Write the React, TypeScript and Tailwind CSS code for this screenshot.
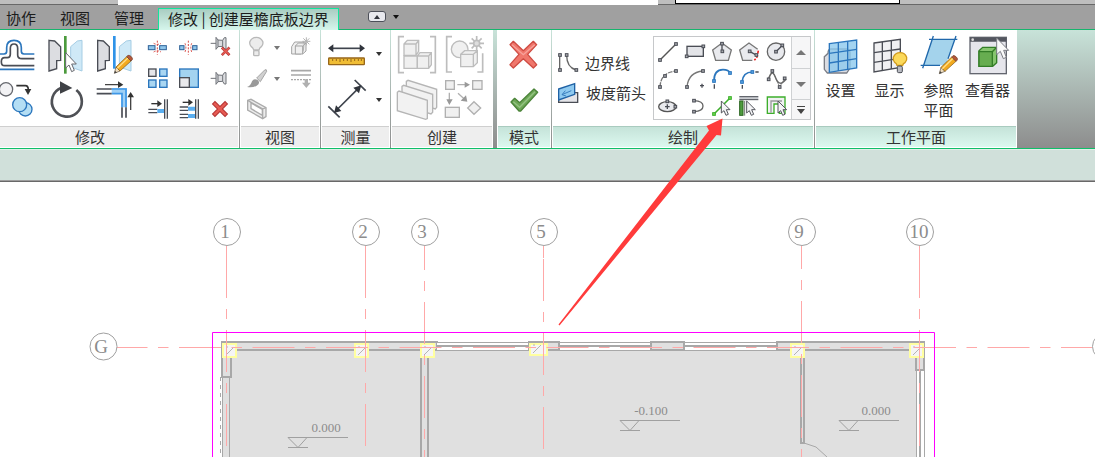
import React from "react";
import clsx from "clsx";

const DARK = "#4a4d55";
const BLUE = "#2b76bd";
const GREEN = "#3dae2b";

interface IconProps {
  box: string;
  className?: string;
  children: React.ReactNode;
}

const Icon: React.FC<IconProps> = ({ box, className = "size-9", children }) => {
  return (
    <svg
      viewBox={box}
      fill="none"
      aria-hidden="true"
      className={clsx("block shrink-0 overflow-visible", className)}
    >
      {children}
    </svg>
  );
};

const SmallIcon: React.FC<IconProps> = ({ box, children }) => {
  return (
    <Icon box={box} className="size-5">
      {children}
    </Icon>
  );
};

const Tool = ({
  label,
  children,
}: {
  label: string;
  children: React.ReactNode;
}) => {
  return (
    <button type="button" aria-label={label} className="block">
      {children}
    </button>
  );
};

const Caret = ({ label, dim = false }: { label: string; dim?: boolean }) => {
  return (
    <button
      type="button"
      aria-label={label}
      className="flex w-3 items-center justify-center"
    >
      <svg viewBox="0 0 6 4" className="h-1 w-1.5" aria-hidden="true">
        <path d="M0 0h6L3 4z" fill={dim ? "#777" : "#333"} />
      </svg>
    </button>
  );
};

// drawing helpers, all in the coordinates of the surrounding icon

const Cursor = ({ x, y }: { x: number; y: number }) => (
  <path
    transform={`translate(${x} ${y})`}
    d="M0 0V36L8 29L14 43L21 40L15 26H26Z"
    fill="#f4f4f6"
    stroke="#55575e"
    strokeWidth="3"
  />
);

const Node = ({
  x,
  y,
  color = DARK,
  fill = "#a9abb0",
}: {
  x: number;
  y: number;
  color?: string;
  fill?: string;
}) => (
  <rect
    x={x - 4}
    y={y - 4}
    width="8"
    height="8"
    fill={fill}
    stroke={color}
    strokeWidth="3"
  />
);

const Pencil = ({ x, y }: { x: number; y: number }) => (
  <g transform={`translate(${x} ${y})`} strokeWidth="2">
    <path d="M0 0L5 -19L17 -7Z" fill="#eeddc0" stroke="#5b4a33" />
    <path d="M0 0L2 -8L8 -2Z" fill="#444" />
    <path d="M5 -19L37 -50L50 -37L17 -7Z" fill="#f2a91f" stroke="#7a5312" />
    <path d="M9 -15L41 -46" stroke="#ffdf8a" strokeWidth="4" />
    <path
      d="M37 -50L41 -54Q46 -55 51 -50Q56 -45 54 -41L50 -37Z"
      fill="#b5573a"
      stroke="#6b3a24"
    />
  </g>
);

const Pin = ({ y }: { y: number }) => (
  <g
    transform={`translate(632 ${y})`}
    stroke="#6f7278"
    strokeWidth="3"
    fill="#dcdde0"
  >
    <path d="M0 0H16" />
    <path d="M16 -18L22 -10L36 -9L41 -17H46V17H41L36 9L22 10L16 18Z" />
    <path d="M22 -10V10M36 -9V9" />
  </g>
);

const Cross = ({ x, y, r }: { x: number; y: number; r: number }) => (
  <g transform={`translate(${x} ${y}) scale(${r / 20})`}>
    <path
      d="M-16 -16L16 16M16 -16L-16 16"
      stroke="#b33434"
      strokeWidth="14"
      strokeLinecap="square"
    />
    <path
      d="M-16 -16L16 16M16 -16L-16 16"
      stroke="#e65a52"
      strokeWidth="8"
      strokeLinecap="square"
    />
  </g>
);

interface PanelProps {
  title: string;
  active?: boolean;
  className?: string;
  bodyClassName?: string;
  children: React.ReactNode;
}

const Panel: React.FC<PanelProps> = ({
  title,
  active,
  className,
  bodyClassName,
  children,
}) => {
  return (
    <section
      className={clsx("flex shrink-0 flex-col bg-white", className)}
      aria-label={title}
    >
      <div className={clsx("flex h-24 items-start pt-1.5", bodyClassName)}>
        {children}
      </div>
      <h2
        className={clsx(
          "mx-px mb-px h-[21px] border-t text-center text-[15px] leading-5",
          active
            ? "border-[#a9cbbf] bg-linear-to-b from-[#c5e3d9] to-[#dcf8ef]"
            : "border-[#cfcfcf] bg-[#eeeeee]"
        )}
      >
        {title}
      </h2>
    </section>
  );
};

const ModifyPanel = () => {
  return (
    <Panel
      title="修改"
      className="-ml-[59px] w-[298px]"
      bodyClassName="justify-end gap-[15px] pr-2.5"
    >
      <div className="grid grid-cols-[36px_36px_36px] gap-x-[13px] gap-y-2.5">
        <Tool label="偏移">
          <Icon box="-6 108 108 108">
            <g strokeWidth="5">
              <path
                d="M-30 162H12Q20 162 20 154V143Q20 121 42 121Q64 121 64 143V154Q64 162 72 162H103"
                stroke={BLUE}
              />
              <path
                d="M103 176H66Q53 176 53 165V145Q53 132 42 132Q31 132 31 145V163Q31 173 22 173H14Q4 173 4 185Q4 197 14 197H103"
                stroke={DARK}
              />
              <path d="M-30 208H103" stroke={BLUE} />
            </g>
          </Icon>
        </Tool>
        <Tool label="镜像 - 拾取轴">
          <Icon box="141 108 108 108">
            <path
              d="M147 121L164 123L182 140V181L170 182V206L147 213Z"
              fill="#dcdde1"
              stroke={DARK}
              strokeWidth="4"
            />
            <path
              d="M246 121L232 123L212 140V201L246 213Z"
              fill="#cfe9f7"
              stroke="#a5cde4"
              strokeWidth="3"
            />
            <path d="M196 108V221" stroke="#4b9a3c" strokeWidth="8" />
            <path
              d="M197 158V204L207 195L215 215L223 211L215 192H229Z"
              fill="#fff"
              stroke="#66686e"
              strokeWidth="3"
            />
          </Icon>
        </Tool>
        <Tool label="镜像 - 绘制轴">
          <Icon box="288 108 108 108">
            <path
              d="M293 121L310 123L328 140V181L316 182V206L293 213Z"
              fill="#dcdde1"
              stroke={DARK}
              strokeWidth="4"
            />
            <path
              d="M393 121L379 123L358 140V201L393 213Z"
              fill="#cfe9f7"
              stroke="#a5cde4"
              strokeWidth="3"
            />
            <path d="M343 108V206" stroke="#2f93e8" strokeWidth="8" />
            <Pencil x={343} y={220} />
          </Icon>
        </Tool>
        <Tool label="复制">
          <Icon box="-6 246 108 108">
            <circle
              cx="18"
              cy="268"
              r="20"
              fill="#f2f2f4"
              stroke="#66686e"
              strokeWidth="4"
            />
            <path d="M49 257H76Q85 257 85 270" stroke="#333" strokeWidth="5" />
            <path d="M74 267H94L84 285Z" fill="#333" />
            <g fill="#b4def4" stroke={BLUE} strokeWidth="4">
              <circle cx="76" cy="328" r="20" />
              <circle cx="59" cy="314" r="21" />
            </g>
          </Icon>
        </Tool>
        <Tool label="旋转">
          <Icon box="141 246 108 108">
            <path
              d="M229 270A45 45 0 1 1 184 263"
              stroke="#4f5156"
              strokeWidth="8"
            />
            <path d="M180 244L217 264L180 281Z" fill="#3f4146" />
          </Icon>
        </Tool>
        <Tool label="修剪/延伸为角">
          <Icon box="288 246 108 108">
            <path d="M335 264H381V322H364V282H335Z" fill="#9fd0f5" />
            <path
              d="M335 267H378V322M335 281H366V322"
              stroke="#3f97e6"
              strokeWidth="5"
            />
            <path
              d="M290 267H335M290 281H335M366 322V353M378 322V353"
              stroke={DARK}
              strokeWidth="5"
            />
            <path d="M315 254H360M392 330V290" stroke="#444" strokeWidth="4" />
            <path
              d="M354 244L370 254L354 264ZM382 292L392 276L402 292Z"
              fill="#333"
            />
          </Icon>
        </Tool>
      </div>
      <div className="mt-0.5 grid grid-cols-[20px_20px_20px] gap-[11px]">
        <Tool label="拆分图元">
          <SmallIcon box="441 114 60 60">
            <g fill="#8fc5ea" stroke="#2f6298" strokeWidth="3">
              <rect x="445" y="137" width="20" height="12" />
              <rect x="479" y="137" width="20" height="12" />
            </g>
            <path
              d="M472 122V164M461 130Q472 136 483 130M461 156Q472 149 483 156"
              stroke="#d84b45"
              strokeWidth="3"
              strokeDasharray="6 4"
            />
          </SmallIcon>
        </Tool>
        <Tool label="用间隙拆分">
          <SmallIcon box="534 114 60 60">
            <g fill="#8fc5ea" stroke="#2f6298" strokeWidth="3">
              <rect x="539" y="137" width="13" height="12" />
              <rect x="578" y="137" width="13" height="12" />
            </g>
            <path
              d="M565 122V164M555 130Q560 143 555 156M575 130Q570 143 575 156"
              stroke="#d84b45"
              strokeWidth="3"
              strokeDasharray="6 4"
            />
          </SmallIcon>
        </Tool>
        <Tool label="解锁">
          <SmallIcon box="627 114 60 60">
            <Pin y={130} />
            <Cross x={677} y={154} r={11} />
          </SmallIcon>
        </Tool>
        <Tool label="阵列">
          <SmallIcon box="441 207 60 60">
            <rect
              x="446"
              y="207"
              width="22"
              height="22"
              fill="#e6e6ea"
              stroke={DARK}
              strokeWidth="4"
            />
            <g fill="#a9d6f2" stroke={BLUE} strokeWidth="4">
              <rect x="479" y="207" width="22" height="22" />
              <rect x="446" y="240" width="22" height="22" />
              <rect x="479" y="240" width="22" height="22" />
            </g>
          </SmallIcon>
        </Tool>
        <Tool label="缩放">
          <SmallIcon box="534 207 60 60">
            <rect
              x="539"
              y="207"
              width="56"
              height="55"
              fill="#a3d3f0"
              stroke={BLUE}
              strokeWidth="4"
            />
            <rect
              x="539"
              y="233"
              width="29"
              height="29"
              fill="#e9e9ec"
              stroke={DARK}
              strokeWidth="4"
            />
          </SmallIcon>
        </Tool>
        <Tool label="锁定">
          <SmallIcon box="627 207 60 60">
            <Pin y={235} />
          </SmallIcon>
        </Tool>
        <Tool label="修剪/延伸单个图元">
          <SmallIcon box="441 300 60 60">
            <path d="M445 328H472M445 338H472" stroke={DARK} strokeWidth="4" />
            <path d="M472 333H494" stroke="#5aaef0" strokeWidth="12" />
            <path d="M494 298V356M502 298V356" stroke={DARK} strokeWidth="4" />
            <path d="M454 311H476" stroke="#333" strokeWidth="4" />
            <path d="M472 301L486 311L472 321Z" fill="#333" />
          </SmallIcon>
        </Tool>
        <Tool label="修剪/延伸多个图元">
          <SmallIcon box="534 300 60 60">
            <path
              d="M539 321H564M539 331H564M539 343H564M539 353H564"
              stroke={DARK}
              strokeWidth="4"
            />
            <path
              d="M564 326H587M564 348H587"
              stroke="#5aaef0"
              strokeWidth="12"
            />
            <path d="M587 298V356M595 298V356" stroke={DARK} strokeWidth="4" />
            <path d="M548 307H570" stroke="#333" strokeWidth="4" />
            <path d="M565 297L579 307L565 317Z" fill="#333" />
          </SmallIcon>
        </Tool>
        <Tool label="删除">
          <SmallIcon box="627 300 60 60">
            <Cross x={660} y={327} r={19} />
          </SmallIcon>
        </Tool>
      </div>
    </Panel>
  );
};

const ViewPanel = () => {
  return (
    <Panel title="视图" className="w-20" bodyClassName="pl-[7px]">
      <div className="mt-0.5 grid grid-cols-[20px_12px_20px] gap-x-1 gap-y-[11px]">
        <Tool label="隐藏">
          <SmallIcon box="33 114 60 60">
            <g fill="#ececec" stroke="#b9b9b9" strokeWidth="4">
              <path d="M53 150Q52 144 46 140Q39 133 42 124Q48 112 61 112Q74 112 80 124Q83 133 76 140Q70 144 69 150Z" />
              <rect x="53" y="152" width="16" height="15" rx="3" />
            </g>
          </SmallIcon>
        </Tool>
        <Caret label="隐藏选项" dim />
        <div className="pl-1">
          <Tool label="替换图元">
            <SmallIcon box="165 114 60 60">
              <g fill="#f0f0f0" stroke="#a3a3a3" strokeWidth="3">
                <path d="M167 140L176 126L204 126L203 154L194 162H167Z" />
                <path d="M178 138H200V162H178ZM178 138L187 129H210L200 138M210 129V153L200 162" />
              </g>
              <path
                d="M211 112V136M199 124H223M202 115L220 133M220 115L202 133"
                stroke="#b3b3b3"
                strokeWidth="3"
              />
            </SmallIcon>
          </Tool>
        </div>
        <Tool label="线处理">
          <SmallIcon box="33 207 60 60">
            <path
              d="M62 234L86 210Q92 206 92 214L73 245Z"
              fill="#d0d0d0"
              stroke="#a5a5a5"
              strokeWidth="3"
            />
            <path
              d="M33 261Q44 258 48 244Q54 233 66 241Q74 250 62 257Q50 264 33 261Z"
              fill="#999"
            />
          </SmallIcon>
        </Tool>
        <Caret label="线处理选项" dim />
        <div className="pl-1">
          <Tool label="线样式">
            <SmallIcon box="165 207 60 60">
              <path
                d="M165 212H225M165 225H225"
                stroke="#a8a8a8"
                strokeWidth="5"
              />
              <path
                d="M165 239H225"
                stroke="#a8a8a8"
                strokeWidth="4"
                strokeDasharray="6 3"
              />
              <path
                d="M206 238H216V248H224L211 264L198 248H206Z"
                fill="#b0b0b0"
              />
            </SmallIcon>
          </Tool>
        </div>
        <Tool label="选择框">
          <SmallIcon box="33 300 60 60">
            <g stroke="#ababab" strokeWidth="4" fill="#ececec">
              <path d="M35 301L45 298L90 323V350L80 356L35 330Z" />
              <path d="M45 309L79 328V346L45 326Z" fill="#fff" />
              <path d="M35 301L80 327V356M80 327L90 323" fill="none" />
            </g>
          </SmallIcon>
        </Tool>
      </div>
    </Panel>
  );
};

const MeasurePanel = () => {
  return (
    <Panel title="测量" className="w-[69px]" bodyClassName="pl-[7px]">
      <div className="grid grid-cols-[36px_12px] gap-x-[9px] gap-y-2.5">
        <Tool label="测量">
          <Icon box="276 108 108 108">
            <path d="M290 145H374" stroke="#3f444d" strokeWidth="5" />
            <path
              d="M276 145L292 133V157ZM387 145L371 133V157Z"
              fill="#30343c"
            />
            <rect
              x="278"
              y="174"
              width="107"
              height="20"
              rx="2"
              fill="#f0bd35"
              stroke="#97661a"
              strokeWidth="4"
            />
            <path
              d="M290 177V183M301 177V183M312 177V186M323 177V183M334 177V183M345 177V186M356 177V183M367 177V183M376 177V183"
              stroke="#97661a"
              strokeWidth="3"
            />
          </Icon>
        </Tool>
        <Caret label="测量选项" />
        <Tool label="对齐尺寸标注">
          <Icon box="276 246 108 108">
            <path
              d="M302 330L364 268M356 240L389 272M277 319L311 352"
              stroke="#3f444d"
              strokeWidth="5"
            />
            <path
              d="M376 256L352 263L369 280ZM294 339L300 316L316 333Z"
              fill="#30343c"
            />
          </Icon>
        </Tool>
        <Caret label="尺寸标注选项" />
      </div>
    </Panel>
  );
};

const CreatePanel = () => {
  return (
    <Panel title="创建" className="w-[102px]" bodyClassName="pl-[7px]">
      <div className="grid grid-cols-[36px_36px] gap-x-3 gap-y-2.5">
        <Tool label="创建部件">
          <Icon box="486 108 108 108">
            <g stroke="#bdbdbd" strokeWidth="5">
              <path d="M504 110H488V218H504M582 110H598V218H582" />
              <g fill="#f0f0f0" strokeWidth="4">
                <path d="M504 132L514 121H548V154L540 166H504ZM504 132H540V166M540 132L548 121" />
                <path d="M504 168H544V205H504Z" />
                <path d="M544 168L552 158H586V194L578 205H544ZM544 168H578V205M578 168L586 158" />
              </g>
            </g>
          </Icon>
        </Tool>
        <Tool label="创建组">
          <Icon box="630 108 108 108">
            <g stroke="#bdbdbd" strokeWidth="5">
              <path d="M648 110H632V216H648M724 216H740V160" />
              <g fill="#f0f0f0" strokeWidth="4">
                <circle cx="671" cy="148" r="25" />
                <path d="M674 163L686 152H724V188L712 200H674ZM674 163H712V200M712 163L724 152" />
              </g>
              <circle cx="722" cy="130" r="9" fill="#ddd" />
              <path d="M722 108V120M722 140V152M700 130H712M732 130H744M707 115L715 123M729 137L737 145M737 115L729 123M715 137L707 145" />
            </g>
          </Icon>
        </Tool>
        <Tool label="创建零件">
          <Icon box="486 246 108 108">
            <g fill="#f2f2f2" stroke="#b5b5b5" strokeWidth="4">
              <path d="M511 244L516 241L602 268V322L598 327L511 300Z" />
              <path d="M498 259L503 256L590 283V337L585 342L498 314Z" />
              <path d="M484 277L489 273L574 301V356L569 358L484 332Z" />
            </g>
          </Icon>
        </Tool>
        <Tool label="创建类似实例">
          <Icon box="630 246 108 108">
            <g stroke="#b0b0b0" strokeWidth="4">
              <g fill="#f0f0f0">
                <rect x="629" y="242" width="26" height="26" />
                <rect x="710" y="242" width="28" height="26" />
                <rect x="628" y="322" width="42" height="30" />
                <path d="M714 305L734 324L714 343L695 324Z" />
              </g>
              <path d="M664 254H692M640 278V302M666 280L684 296" />
            </g>
            <path
              d="M686 245L702 254L686 263ZM631 298H650L640 315ZM694 305L674 302L690 286Z"
              fill="#999"
            />
          </Icon>
        </Tool>
      </div>
    </Panel>
  );
};

const ModePanel = () => {
  return (
    <Panel
      title="模式"
      active
      className="ml-[3px] w-[54px]"
      bodyClassName="justify-center"
    >
      <div className="grid gap-2.5">
        <Tool label="取消编辑模式">
          <Icon box="48 108 108 108">
            <path
              d="M60 134L70 124L100 152L130 124L140 134L113 163L140 194L130 204L100 176L70 204L60 194L87 163Z"
              fill="#f0776c"
              stroke="#cf4c43"
              strokeWidth="4"
              strokeLinejoin="round"
            />
            <path d="M66 134L100 164L134 134" stroke="#f7a39b" strokeWidth="4" />
          </Icon>
        </Tool>
        <Tool label="完成编辑模式">
          <Icon box="48 246 108 108">
            <path
              d="M63 306L74 295L89 308L132 267L143 277L92 333H87Z"
              fill="#6da656"
              stroke="#4b8439"
              strokeWidth="4"
              strokeLinejoin="round"
            />
            <path d="M70 305L89 322L135 275" stroke="#94c383" strokeWidth="4" />
          </Icon>
        </Tool>
      </div>
    </Panel>
  );
};

const drawTools: { label: string; box: string; art: React.ReactNode }[] = [
  {
    label: "线",
    box: "504 123 60 60",
    art: (
      <>
        <path d="M510 177L558 129" stroke="#555" strokeWidth="4" />
        <Node x={510} y={177} />
        <Node x={558} y={129} />
      </>
    ),
  },
  {
    label: "矩形",
    box: "588 123 60 60",
    art: (
      <>
        <rect
          x="594"
          y="136"
          width="49"
          height="30"
          fill="#e3e4e8"
          stroke={DARK}
          strokeWidth="4"
        />
        <Node x={593} y={166} />
        <Node x={643} y={136} />
      </>
    ),
  },
  {
    label: "内接多边形",
    box: "669 123 60 60",
    art: (
      <>
        <path
          d="M699 126L727 147L718 178H680L671 147Z"
          fill="#e9eaee"
          stroke="#777"
          strokeWidth="4"
        />
        <path d="M699 127V151" stroke={DARK} strokeWidth="4" />
        <Node x={699} y={128} />
        <Node x={700} y={151} />
      </>
    ),
  },
  {
    label: "外接多边形",
    box: "750 123 60 60",
    art: (
      <>
        <path
          d="M790 178H761L752 147L780 126L806 145"
          fill="#e9eaee"
          stroke="#777"
          strokeWidth="4"
        />
        <path d="M782 151L801 162" stroke={DARK} strokeWidth="4" />
        <path
          d="M808 149L804 168L796 178"
          stroke="#e22"
          strokeWidth="5"
          strokeDasharray="9 4"
        />
        <Node x={782} y={151} />
        <Node x={802} y={162} />
      </>
    ),
  },
  {
    label: "圆形",
    box: "832 123 60 60",
    art: (
      <>
        <circle
          cx="862"
          cy="152"
          r="26"
          fill="#e9eaee"
          stroke="#666"
          strokeWidth="4"
        />
        <path d="M862 152L882 132" stroke={DARK} strokeWidth="4" />
        <Node x={862} y={152} />
        <Node x={881} y={133} />
      </>
    ),
  },
  {
    label: "起点-终点-半径弧",
    box: "504 204 60 60",
    art: (
      <>
        <path
          d="M510 258Q512 214 558 210"
          stroke="#777"
          strokeWidth="4"
          strokeDasharray="14 3"
        />
        <Node x={510} y={258} />
        <Node x={525} y={225} />
        <Node x={558} y={210} />
      </>
    ),
  },
  {
    label: "圆心-端点弧",
    box: "588 204 60 60",
    art: (
      <>
        <path d="M594 258Q598 214 642 210" stroke="#777" strokeWidth="4" />
        <path d="M639 248V260M633 254H645" stroke={DARK} strokeWidth="4" />
        <Node x={594} y={258} />
        <Node x={642} y={210} />
      </>
    ),
  },
  {
    label: "相切-端点弧",
    box: "669 204 60 60",
    art: (
      <>
        <path
          d="M675 240Q675 206 702 206Q719 206 723 216"
          stroke={BLUE}
          strokeWidth="5"
        />
        <path d="M676 250V263" stroke={DARK} strokeWidth="4" />
        <Node x={675} y={240} color={BLUE} fill="#5aa5e4" />
        <Node x={723} y={216} color={BLUE} fill="#5aa5e4" />
      </>
    ),
  },
  {
    label: "圆角弧",
    box: "750 204 60 60",
    art: (
      <>
        <path d="M759 243Q762 213 790 213" stroke={BLUE} strokeWidth="5" />
        <path d="M760 252V263M799 213H809" stroke={DARK} strokeWidth="4" />
        <Node x={759} y={243} color={BLUE} fill="#5aa5e4" />
        <Node x={790} y={213} color={BLUE} fill="#5aa5e4" />
      </>
    ),
  },
  {
    label: "样条曲线",
    box: "832 204 60 60",
    art: (
      <>
        <path
          d="M840 235L851 210L873 258L888 232"
          stroke="#999"
          strokeWidth="3"
        />
        <path
          d="M838 238Q850 200 860 228Q872 262 892 234"
          stroke="#666"
          strokeWidth="4"
        />
        <Node x={840} y={235} />
        <Node x={851} y={210} />
        <Node x={873} y={258} />
        <Node x={888} y={232} />
      </>
    ),
  },
  {
    label: "椭圆",
    box: "504 288 60 60",
    art: (
      <>
        <ellipse
          cx="532"
          cy="320"
          rx="26"
          ry="15"
          fill="#e9eaee"
          stroke="#555"
          strokeWidth="4"
        />
        <path d="M532 313V327M525 320H539" stroke={DARK} strokeWidth="4" />
        <Node x={532} y={304} />
        <Node x={556} y={320} />
      </>
    ),
  },
  {
    label: "半椭圆",
    box: "588 288 60 60",
    art: (
      <>
        <path
          d="M615 302Q642 303 642 318Q642 334 615 335"
          stroke="#666"
          strokeWidth="4"
        />
        <Node x={615} y={302} />
        <Node x={615} y={335} />
      </>
    ),
  },
  {
    label: "拾取线",
    box: "669 288 60 60",
    art: (
      <>
        <path d="M675 342L723 294" stroke={GREEN} strokeWidth="5" />
        <Node x={675} y={342} color={GREEN} fill="#6fdc52" />
        <Node x={723} y={294} color={GREEN} fill="#6fdc52" />
        <Cursor x={697} y={303} />
      </>
    ),
  },
  {
    label: "拾取墙",
    box: "750 288 60 60",
    art: (
      <>
        <path d="M751 294H808" stroke="#c9cbd0" strokeWidth="8" />
        <path d="M751 290H808M751 299H808" stroke={DARK} strokeWidth="3" />
        <rect
          x="752"
          y="303"
          width="10"
          height="43"
          fill="#4f9c3f"
          stroke="#28641e"
          strokeWidth="3"
        />
        <path d="M767 303V347" stroke="#777" strokeWidth="3" />
        <Cursor x={773} y={303} />
      </>
    ),
  },
  {
    label: "拾取边界",
    box: "832 288 60 60",
    art: (
      <>
        <path
          d="M836 291H889V340H872V312H856V340H836Z"
          fill="#f1f1f3"
          stroke={GREEN}
          strokeWidth="4"
        />
        <path d="M847 338V303H880" stroke="#9a9a9e" strokeWidth="4" />
        <Cursor x={868} y={303} />
      </>
    ),
  },
];

const DrawPanel = () => {
  return (
    <Panel
      title="绘制"
      active
      className="w-[262px]"
      bodyClassName="justify-between pl-1.5 pr-[3px]"
    >
      <div className="pt-3 text-[15px]">
        <button type="button" className="flex h-[30px] items-center gap-[7px]">
          <SmallIcon box="206 159 60 60">
            <path
              d="M211 166V210M232 166Q232 202 260 210"
              stroke="#666"
              strokeWidth="4"
            />
            <Node x={212} y={165} />
            <Node x={212} y={210} />
            <Node x={232} y={165} />
            <Node x={261} y={210} />
          </SmallIcon>
          边界线
        </button>
        <button type="button" className="flex h-[30px] items-center gap-2">
          <SmallIcon box="206 249 60 60">
            <path
              d="M220 278H265V307H208V290"
              fill="#e4e4e8"
              stroke={DARK}
              strokeWidth="4"
            />
            <path
              d="M208 267L256 251V283L208 300Z"
              fill="#8fcaf0"
              stroke="#1f62a5"
              strokeWidth="4"
            />
            <path
              d="M218 284L246 272M218 284L228 272M218 284L230 288"
              stroke="#3b80c0"
              strokeWidth="3"
            />
          </SmallIcon>
          坡度箭头
        </button>
      </div>
      <div className="flex h-[84px] w-[158px] border border-[#c6c8ca]">
        <div className="grid grow grid-cols-[repeat(5,27px)] grid-rows-[repeat(3,27px)] place-items-center content-start pt-px">
          {drawTools.map((tool) => (
            <Tool key={tool.label} label={tool.label}>
              <SmallIcon box={tool.box}>{tool.art}</SmallIcon>
            </Tool>
          ))}
        </div>
        <div className="flex w-[19px] flex-col border-l border-[#cfd1d3] bg-[#f6f6f7]">
          <button
            type="button"
            aria-label="向上滚动"
            className="flex h-[31px] items-center justify-center"
          >
            <svg viewBox="0 0 10 5" className="h-[5px] w-2.5">
              <path d="M0 5H10L5 0Z" fill="#777" />
            </svg>
          </button>
          <button
            type="button"
            aria-label="向下滚动"
            className="flex h-8 items-center justify-center border-y border-[#cfd1d3]"
          >
            <svg viewBox="0 0 10 5" className="h-[5px] w-2.5">
              <path d="M0 0H10L5 5Z" fill="#777" />
            </svg>
          </button>
          <button
            type="button"
            aria-label="展开绘制工具"
            className="flex grow items-center justify-center"
          >
            <svg viewBox="0 0 8 8" className="size-2">
              <path d="M0 0H8V1H0ZM0 3H8L4 8Z" fill="#444" />
            </svg>
          </button>
        </div>
      </div>
    </Panel>
  );
};

const WorkPlanePanel = () => {
  const item = "flex w-[49px] flex-col items-center gap-2";

  return (
    <Panel
      title="工作平面"
      active
      className="w-[202px]"
      bodyClassName="pl-px text-[15px] leading-5"
    >
      <button type="button" className={item}>
        <Icon box="37 108 108 108">
          <path
            d="M41 170L52 160Q52 146 62 147L108 147Q118 148 118 158V204L108 219H50L41 208Z"
            fill="#dcdde2"
            stroke="#7b7e86"
            strokeWidth="4"
          />
          <path
            d="M56 131L138 120V204L56 217Z"
            fill="#8cc9ee"
            fillOpacity="0.8"
            stroke={BLUE}
            strokeWidth="4"
          />
          <path
            d="M83 127V213M111 124V208M56 160L138 148M56 189L138 176"
            stroke={BLUE}
            strokeWidth="4"
          />
        </Icon>
        设置
      </button>
      <button type="button" className={item}>
        <Icon box="184 108 108 108">
          <path
            d="M190 129L269 118V202L190 216Z"
            fill="#f0f0f2"
            stroke={DARK}
            strokeWidth="4"
          />
          <path
            d="M215 125V212M242 122V207M190 158L269 147M190 187L269 175"
            stroke={DARK}
            strokeWidth="4"
          />
          <path
            d="M259 196Q258 190 252 187Q246 180 248 172Q254 158 268 158Q283 158 288 172Q290 181 283 188Q277 191 276 196Z"
            fill="#fbd95b"
            stroke="#d19b1d"
            strokeWidth="4"
          />
          <rect
            x="260"
            y="198"
            width="15"
            height="20"
            rx="4"
            fill="#b9bbc2"
            stroke={DARK}
            strokeWidth="3"
          />
        </Icon>
        显示
      </button>
      <button type="button" className={item}>
        <Icon box="331 108 108 108">
          <path d="M365 118H432L405 196H338Z" fill="#a4d3ec" />
          <path
            d="M355 118H440M330 196H388M368 108L336 205M436 108L412 176"
            stroke="#2068ab"
            strokeWidth="4"
          />
          <Pencil x={386} y={221} />
        </Icon>
        <span>
          参照
          <br />
          平面
        </span>
      </button>
      <button type="button" className={item}>
        <Icon box="478 108 108 108">
          <rect
            x="478"
            y="112"
            width="109"
            height="109"
            fill="#e6e6ec"
            stroke="#63666f"
            strokeWidth="4"
          />
          <path d="M478 119H587" stroke="#53565f" strokeWidth="13" />
          <circle cx="486" cy="119" r="4" fill="#ddd" />
          <path
            d="M505 152L516 142H558V188L546 199H505Z"
            fill="#86c56e"
            stroke="#337d27"
            strokeWidth="4"
          />
          <path
            d="M505 155H545V199H505Z"
            fill="#67ad50"
            stroke="#337d27"
            strokeWidth="4"
          />
          <path d="M545 155L558 142" stroke="#337d27" strokeWidth="4" />
          <path
            d="M558 114V164L569 154L578 176L587 172L579 151H594Z"
            fill="#fafafa"
            stroke="#7b7d84"
            strokeWidth="3"
          />
        </Icon>
        查看器
      </button>
    </Panel>
  );
};

const axes = [
  { label: "1", x: 226.5, textX: 225, stub: true, shift: 64 },
  { label: "2", x: 365.5, textX: 363, stub: true, shift: 64 },
  { label: "3", x: 424.5, textX: 422, stub: false, shift: 18 },
  { label: "5", x: 543.5, textX: 541, stub: true, shift: 61 },
  { label: "9", x: 801.5, textX: 799, stub: false, shift: 19 },
  { label: "10", x: 919.5, textX: 919, stub: true, shift: 64 },
];

const columns = [
  { x: 222, w: 15, h: 15 },
  { x: 354, w: 15, h: 15 },
  { x: 420, w: 15, h: 15 },
  { x: 529, w: 19, h: 13 },
  { x: 790, w: 15, h: 15 },
  { x: 909, w: 15, h: 15 },
];

const levels = [
  { value: "0.000", x: 288, y: 437.5, textX: 326 },
  { value: "-0.100", x: 620, y: 420.5, textX: 651 },
  { value: "0.000", x: 839, y: 420.5, textX: 876 },
];

const windows = [
  { x: 437, w: 91 },
  { x: 560, w: 90 },
  { x: 685, w: 91 },
];

const FloorPlan = () => {
  return (
    <svg
      className="block h-[275px] w-full font-['Liberation_Serif',serif]"
      role="img"
      aria-label="平面图"
    >
      <g transform="translate(0 -182)" fill="none">
        <rect x="222" y="342" width="702" height="130" fill="#e0e0e0" />

        <g stroke="#a8a8a8" strokeWidth="2">
          <path d="M222 342H437V350H237" />
          <path d="M222 341V377H231V358" />
          <path d="M529 342H559V350H529Z" />
          <path d="M651 342H684V350H651Z" />
          <path d="M909 350H777V342H924V370H916V358" />
          <path d="M421 358V470M428 358V470" />
          <path d="M801 358V443H804V358" />
        </g>

        {windows.map((w) => (
          <g key={w.x}>
            <rect x={w.x} y="342" width={w.w} height="8" fill="#fff" />
            <path d={`M${w.x} 342.5h${w.w}m0 8h-${w.w}`} stroke="#a8a8a8" />
            <path
              d={`M${w.x} 346h${w.w}`}
              stroke="#a8a8a8"
              strokeWidth="2"
            />
          </g>
        ))}

        <rect x="916" y="371" width="9" height="90" fill="#fff" />
        <path
          d="M916.5 371V460M924.5 371V460M222.5 377V460M229.5 377V460"
          stroke="#a8a8a8"
        />
        <path d="M920 371V460" stroke="#a8a8a8" strokeWidth="2" />
        <path d="M220.5 377V460" stroke="#a8a8a8" strokeDasharray="4 4" />
        <path d="M804 443L816 447L827 457" stroke="#a8a8a8" />

        {columns.map((c) => (
          <g key={c.x}>
            <rect
              x={c.x + 1}
              y={344}
              width={c.w - 2}
              height={c.h - 2}
              fill="#f5f5f5"
              stroke="#ffffa0"
              strokeWidth="2"
            />
            <path
              d={`M${c.x + 4} ${c.h + 340}l8 -8m-8 0h2`}
              stroke="#b4b4b4"
            />
          </g>
        ))}

        <g stroke="#ffa8a8">
          {axes.map((axis) => (
            <React.Fragment key={axis.label}>
              {axis.stub && <path d={`M${axis.x} 246v12`} />}
              <path
                d={`M${axis.x} 246V457`}
                strokeDasharray="42 11 10 11"
                strokeDashoffset={axis.shift}
              />
            </React.Fragment>
          ))}
          <path
            d="M117 347.5H1092"
            strokeDasharray="42 10.5 10.5 10.5"
            strokeDashoffset="11.5"
          />
        </g>

        <path d="M212.5 460V332.5H934.5V460" stroke="#f0f" />

        <g stroke="#a0a0a0">
          {axes.map((axis) => (
            <circle key={axis.label} cx={axis.x + 0.5} cy="232" r="13.5" />
          ))}
          <circle cx="103.5" cy="346.5" r="13.5" />
          <circle cx="1106" cy="346.5" r="13.5" />
          {levels.map((level) => (
            <path
              key={level.x}
              d={`M${level.x} ${level.y}h60m-60 10h20m-20 -10l10 10l9 -10`}
            />
          ))}
        </g>

        <g fill="#8c8c8c" textAnchor="middle" fontSize="19">
          {axes.map((axis) => (
            <text key={axis.label} x={axis.textX} y="238">
              {axis.label}
            </text>
          ))}
          <text x="101" y="353">
            G
          </text>
        </g>
        <g fill="#8c8c8c" textAnchor="middle" fontSize="13">
          {levels.map((level) => (
            <text key={level.x} x={level.textX} y={level.y - 5.5}>
              {level.value}
            </text>
          ))}
        </g>
      </g>
    </svg>
  );
};

export default function App() {
  return (
    <main className="relative min-h-screen overflow-hidden bg-white font-['Noto_Sans_CJK_SC',sans-serif] text-[#333]">
      <div className="flex h-[5px]">
        <div className="w-[118px] border-b border-[#686868] bg-[#bebebe]" />
        <div className="w-[540px]" />
        <div className="grow border-b border-[#686868] bg-[#bebebe] pl-[17px]">
          <div className="h-full w-[225px] border-x border-b border-black bg-white" />
        </div>
      </div>

      <nav className="flex h-[25px] items-end border-b border-[#16b56d] bg-[#a0a0a0] text-[15px] leading-5 text-[#1c1c1c]">
        <a href="#collaborate" className="-ml-1.5 px-3 pb-px">
          协作
        </a>
        <a href="#view" className="px-3 pb-px">
          视图
        </a>
        <a href="#manage" className="px-3 pb-px">
          管理
        </a>
        <a
          href="#modify"
          aria-current="page"
          className="-mb-px ml-0.5 h-[22px] border border-b-0 border-[#12e49c] bg-linear-to-b from-[#a9cdc2] to-[#d6f6ec] px-[9px] leading-[19px]"
        >
          修改 | 创建屋檐底板边界
        </a>
        <button
          type="button"
          aria-label="最小化功能区"
          className="mb-[7px] ml-[29px] flex h-[11px] w-[18px] items-center justify-center rounded-[3px] border border-[#4c4f58] bg-[#e8e9ee]"
        >
          <svg viewBox="0 0 6 4" className="h-1 w-1.5">
            <path d="M0 4H6L3 0Z" fill="#30333b" />
          </svg>
        </button>
        <button
          type="button"
          aria-label="功能区选项"
          className="mb-2.5 ml-[7px] block"
        >
          <svg viewBox="0 0 6 4" className="h-1 w-1.5">
            <path d="M0 0H6L3 4Z" fill="#111" />
          </svg>
        </button>
      </nav>

      <div className="flex gap-px bg-linear-to-b from-[#c8e3d9] to-[#8d8d8d]">
        <ModifyPanel />
        <ViewPanel />
        <MeasurePanel />
        <CreatePanel />
        <ModePanel />
        <DrawPanel />
        <WorkPlanePanel />
      </div>

      <div className="border-t border-[#0fbf69] bg-[#d0e0da]">
        <div className="h-8 border-t border-b border-t-[#e2eee9] border-b-[#9d9d9d]" />
        <div className="h-px bg-[#686868]" />
      </div>

      <FloorPlan />

      <svg
        className="pointer-events-none absolute top-[118px] left-[558px] h-[208px] w-[166px]"
        viewBox="0 0 166 208"
        aria-hidden="true"
      >
        <path
          d="M0.5 206.5L151 12.5L148.5 8L164.5 0.5L163 17.5L158.5 17L1.5 207.5Z"
          fill="#ff3b3b"
        />
      </svg>
    </main>
  );
}
